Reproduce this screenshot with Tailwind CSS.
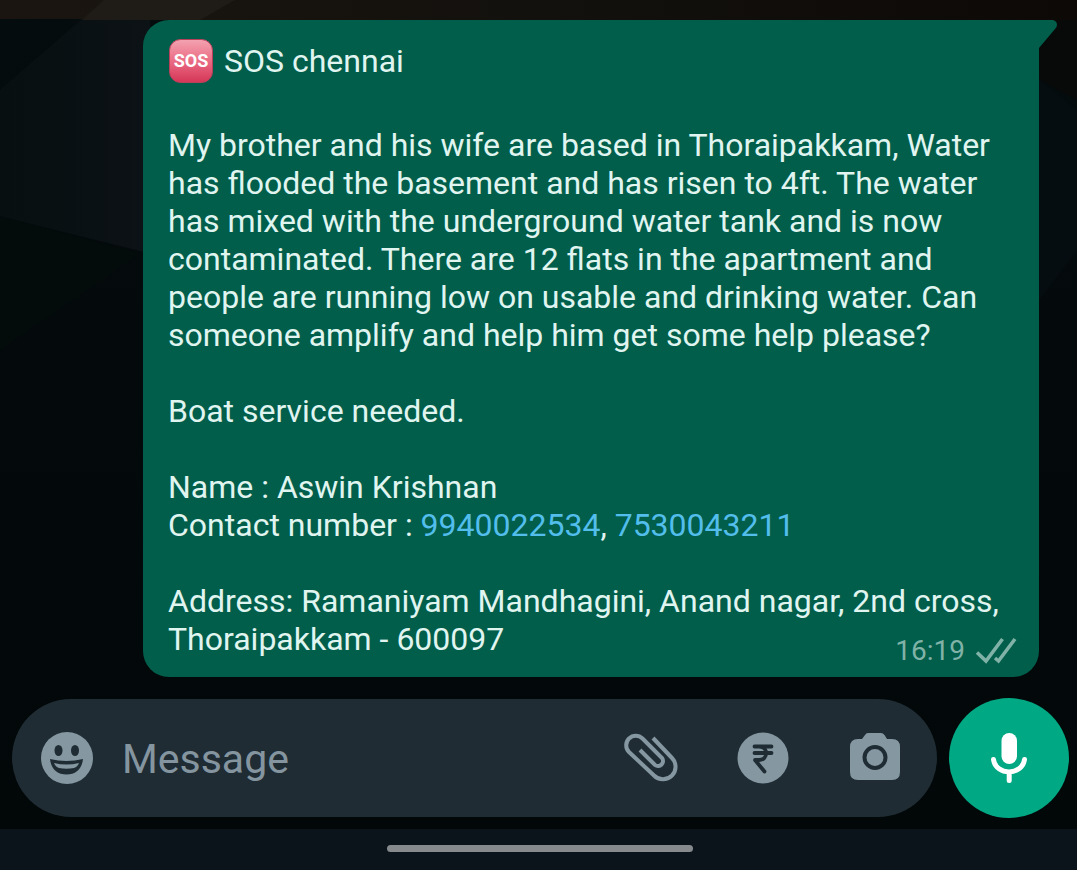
<!DOCTYPE html>
<html lang="en">
<head>
<meta charset="utf-8">
<meta name="viewport" content="width=device-width, initial-scale=1">
<title>Chat</title>
<script src="https://cdn.jsdelivr.net/npm/@tailwindcss/browser@4"></script>
</head>
<body class="relative isolate flex min-h-screen flex-col overflow-x-hidden bg-[#030a0b] font-[Roboto,sans-serif]">
<!-- wallpaper -->
<svg class="absolute inset-0 -z-10 h-full w-full" viewBox="0 0 1077 870" preserveAspectRatio="none" aria-hidden="true">
  <defs>
    <linearGradient id="wall" x1="0" y1="0" x2="0" y2="1"><stop offset="0" stop-color="#050c0e"/><stop offset="1" stop-color="#020708"/></linearGradient>
    <linearGradient id="facet" x1="0" y1="0" x2="1" y2="0"><stop offset="0" stop-color="#070f10"/><stop offset="1" stop-color="#0c1216"/></linearGradient>
    <linearGradient id="top" x1="0" y1="0" x2="1" y2="0"><stop offset="0" stop-color="#1a1511"/><stop offset=".5" stop-color="#13110d"/><stop offset="1" stop-color="#0c0906"/></linearGradient>
  </defs>
  <path fill="url(#wall)" d="M0 0h1077v870H0z"/>
  <path fill="url(#facet)" d="M0 90 82 19H150V253L0 216z"/>
  <path fill="#040b0b" d="M0 216 140 253 0 350z"/>
  <path fill="#080a09" d="M1030 20h47v80l-37-20z"/>
  <path fill="#060d10" d="M1039 80l38 30v140l-38 50z"/>
  <path fill="url(#top)" d="M0 0H1077V20H150V19H0z"/>
  <path fill="#1f1b16" d="M104 0H235L200 20H82z"/>
</svg>

<main class="flex flex-1 flex-col pt-5 pr-[38px] pl-[143px]">
  <article class="relative rounded-[26px] rounded-tr-none bg-[#005e4b] pt-[18px] pr-[22px] pb-[19px] pl-[25px] text-[32px] leading-[38px] text-[#e0f5f0]">
    <svg class="absolute top-0 left-full h-7 w-[18px]" viewBox="0 0 18 28" aria-hidden="true"><path fill="#005e4b" d="M0 0H14Q18 1 18 5Q18 7 16 9L0 28z"/></svg>
    <h1 class="flex h-[46px] items-center gap-2.5">
      <svg class="h-[46px] w-[46px]" viewBox="0 0 46 46" role="img" aria-label="SOS">
        <defs><linearGradient id="sos" x1="0" y1="0" x2="0" y2="1"><stop offset="0" stop-color="#f4a3b1"/><stop offset=".5" stop-color="#ea6c84"/><stop offset="1" stop-color="#d53557"/></linearGradient></defs>
        <rect x="1.500" y="1.500" width="43" height="43" rx="11" fill="url(#sos)" stroke="#b9405a" stroke-width="1"/>
        <text x="23" y="29" text-anchor="middle" font-family="Roboto, sans-serif" font-weight="700" font-size="18" fill="#fff">SOS</text>
      </svg>
      SOS chennai
    </h1>
    <p class="mt-[42px]">My brother and his wife are based in Thoraipakkam, Water<br>has flooded the basement and has risen to 4ft. The water<br>has mixed with the underground water tank and is now<br>contaminated. There are 12 flats in the apartment and<br>people are running low on usable and drinking water. Can<br>someone amplify and help him get some help please?</p>
    <p class="mt-[38px]">Boat service needed.</p>
    <p class="mt-[38px]">Name : Aswin Krishnan<br>Contact number : <a class="text-[#53bdeb]" href="tel:9940022534">9940022534</a>, <a class="text-[#53bdeb]" href="tel:7530043211">7530043211</a></p>
    <div class="mt-[38px]">
      <p>Address: Ramaniyam Mandhagini, Anand nagar, 2nd cross,<br>Thoraipakkam - 600097</p>
      <div class="absolute right-[22px] bottom-2 flex items-center gap-2.5 text-[28px] leading-9 text-[#80b2a7]">
        <time datetime="16:19">16:19</time>
        <svg class="h-7 w-[42px]" viewBox="0 0 42 28" fill="none" stroke="currentColor" stroke-width="3.600" aria-label="Delivered" role="img"><path d="M2 15.500 11 24 27.500 2M20 21l3.500 3L40 2"/></svg>
      </div>
    </div>
  </article>
</main>

<form class="mt-[21px] mb-[11px] flex items-center gap-3 pr-2 pl-3" onsubmit="return false">
  <div class="flex h-[118px] min-w-0 flex-1 items-center rounded-full bg-[#1f2c34] pr-[35px] pl-7 text-[#8597a1]">
    <button type="button" aria-label="Emoji" class="shrink-0">
      <svg class="size-[54px]" viewBox="0 0 54 54"><circle cx="27" cy="27" r="26" fill="currentColor"/><g fill="#1f2c34"><ellipse cx="18.500" cy="19.500" rx="4" ry="5.500"/><ellipse cx="35" cy="19.500" rx="4" ry="5.500"/><path d="M10 28Q26.500 32 43 28C42 38 36 43.500 26.500 43.500S11 38 10 28z"/></g><path fill="currentColor" d="M14 32Q26.500 35 39 32Q37.500 36 34 37Q26.500 38.500 19 37Q15.500 36 14 32z"/></svg>
    </button>
    <input type="text" aria-label="Message" placeholder="Message" class="ml-7 h-14 min-w-0 flex-1 bg-transparent pt-1 text-[41px] text-[#e0f5f0] outline-none placeholder:text-[#8495a0]">
    <div class="flex shrink-0 items-center gap-[58px]">
      <button type="button" aria-label="Attach"><svg class="size-[54px]" viewBox="0 0 54 54" fill="none" stroke="currentColor" stroke-width="4"><path d="M16 19 31 34A5 5 0 0 0 38 27L18.500 7.500A9.500 9.500 0 0 0 5 21L30 44.500A12.400 12.400 0 0 0 48 27L29 7"/></svg></button>
      <button type="button" aria-label="Payment"><svg class="size-[54px]" viewBox="0 0 54 54"><circle cx="27" cy="27" r="25.500" fill="currentColor"/><path d="M18.500 15.500h17M18.500 22h17M18.500 15.500h4.500c9.500 0 9.500 13.500 0 13.500h-4L28.500 40.500" fill="none" stroke="#1f2c34" stroke-width="3.800" stroke-linecap="round" stroke-linejoin="round"/></svg></button>
      <button type="button" aria-label="Camera"><svg class="size-[54px]" viewBox="0 0 54 54"><path fill="currentColor" d="M20 2H33Q35 2 36.500 4L39 8H44Q52 8 52 16V41Q52 49 44 49H10Q2 49 2 41V16Q2 8 10 8H14L17 4Q18 2 20 2z"/><circle cx="27" cy="26.500" r="10.500" fill="none" stroke="#1f2c34" stroke-width="4"/></svg></button>
    </div>
  </div>
  <button type="button" aria-label="Voice message" class="flex size-[120px] shrink-0 items-center justify-center rounded-full bg-[#00a884]">
    <svg class="h-[50px] w-9" viewBox="0 0 36 50" fill="none" stroke="#fff" stroke-linecap="round"><rect x="10.500" y="0" width="15.500" height="31" rx="7.700" fill="#fff" stroke="none"/><path stroke-width="5" d="M2.500 26.500C5 43 31 43 33.500 26.500M18.200 40v7.500"/></svg>
  </button>
</form>
<footer class="flex h-[42px] justify-center bg-[#0b141a] pt-4"><div class="ml-0.5 h-[7px] w-[306px] rounded-full bg-[#868a8c]"></div></footer>
</body>
</html>
